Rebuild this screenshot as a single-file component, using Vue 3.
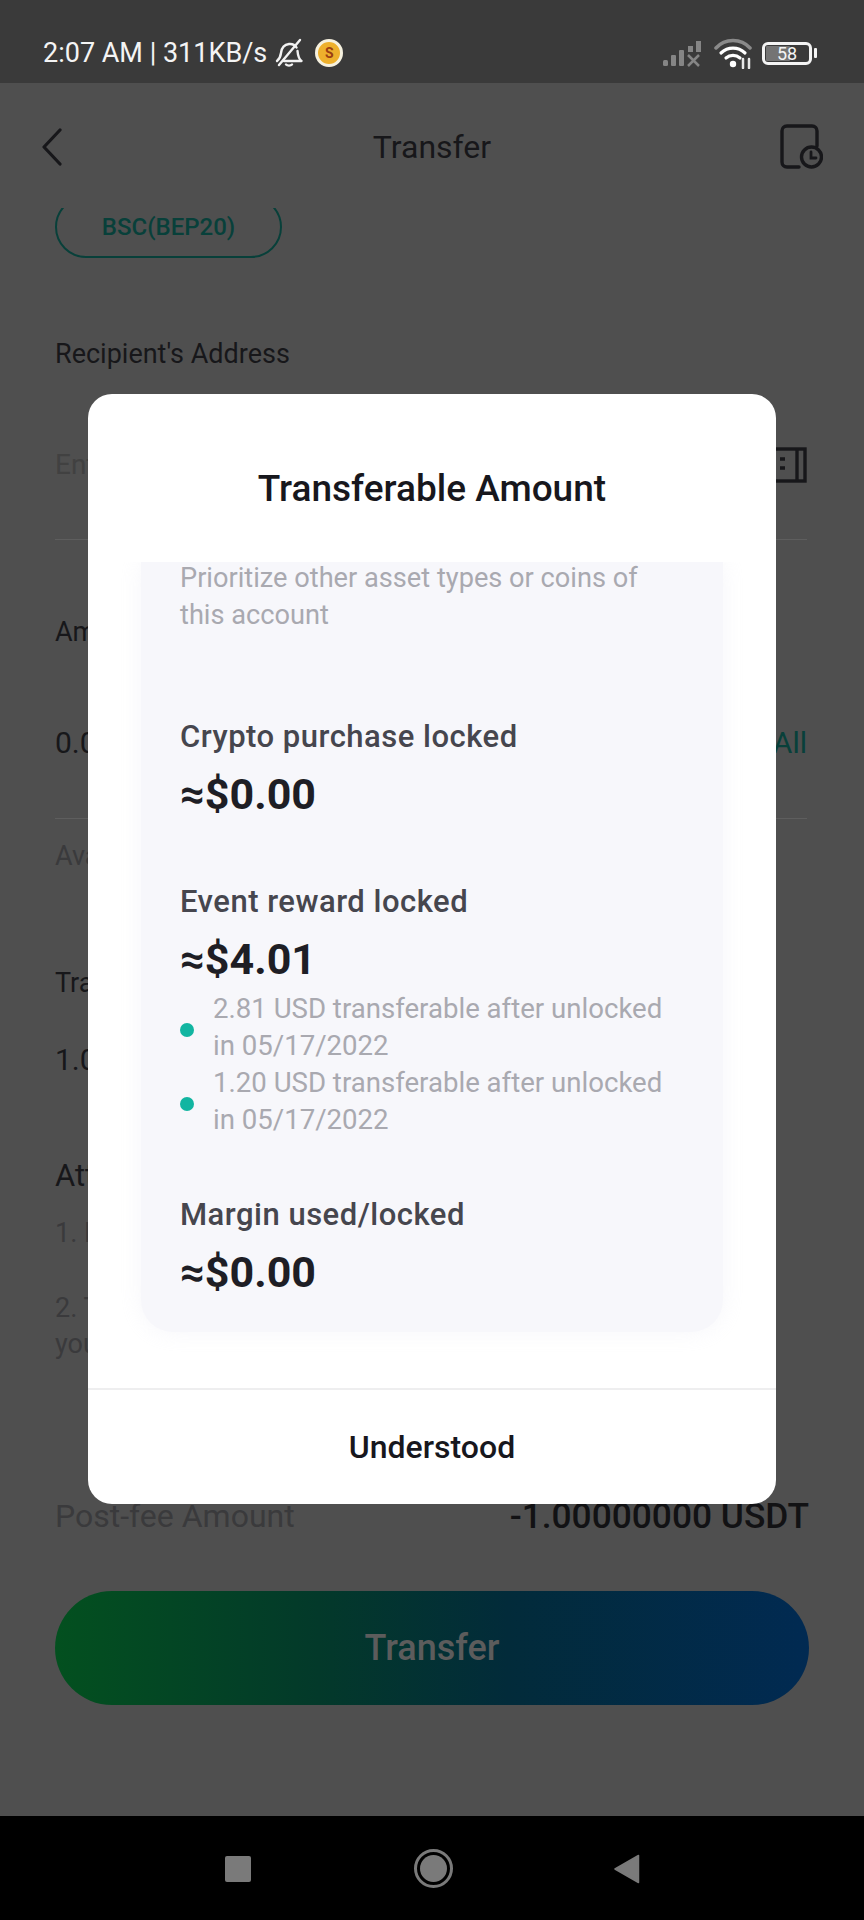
<template>
  <div class="screen">
    <div class="status-bar">
      <div class="status-left">
        <span class="status-text">2:07 AM | 311KB/s</span>
        <svg class="bell" viewBox="0 0 30 30" fill="none" stroke="#f2f2f2" stroke-width="2.4" stroke-linecap="round" stroke-linejoin="round">
          <path d="M3 23c2.500-2 3.500-4 4-8 .6-5 3-8.500 8-9 3-.3 6 1 7.500 3.500" />
          <path d="M23.500 13c.4 4.500 1.500 8 4 10H10" />
          <path d="M12 26.500c1.500 1.500 4.500 1.500 6 0" />
          <path d="M5 27 26 2" />
        </svg>
        <span class="coin"><span class="coin-s">S</span></span>
      </div>
      <div class="status-right">
        <svg class="signal" viewBox="0 0 41 30">
          <rect x="1" y="22" width="5" height="6" rx="1.500" fill="#858585" />
          <rect x="9" y="17" width="5" height="11" rx="1" fill="#858585" />
          <rect x="17" y="12" width="5" height="16" rx="1" fill="#858585" />
          <rect x="26" y="8" width="5" height="6" fill="#858585" />
          <rect x="34" y="3" width="5" height="11" fill="#858585" />
          <path d="M26 17l11 11M37 17 26 28" stroke="#858585" stroke-width="2.500" />
        </svg>
        <svg class="wifi" viewBox="0 0 38 32" fill="none" stroke-linecap="round">
          <path d="M2 11C11 1 27 1 36 11" stroke="#8a8a8a" stroke-width="3.500" />
          <path d="M7 16c7-6.500 17-6.500 24 0" stroke="#fff" stroke-width="3.200" />
          <path d="M12 21c4-3.500 10-3.500 14 0" stroke="#fff" stroke-width="3.200" />
          <circle cx="19" cy="27" r="3.200" fill="#fff" />
          <path d="M29 22v9M35 22v9" stroke="#e8e8e8" stroke-width="2.500" />
        </svg>
        <div class="battery">
          <div class="battery-body">
            <div class="battery-fill" :style="{ width: batteryLevel + '%' }"></div>
            <span class="battery-text">{{ batteryLevel }}</span>
          </div>
          <div class="battery-cap"></div>
        </div>
      </div>
    </div>

    <div class="page">
      <div class="header">
        <svg class="back" viewBox="0 0 22 38" fill="none" stroke="#17171a" stroke-width="3.200" stroke-linecap="round" stroke-linejoin="round">
          <path d="M19 2 3 19l16 17" />
        </svg>
        <span class="header-title">Transfer</span>
        <svg class="history" viewBox="0 0 44 46" fill="none" stroke="#17171a" stroke-width="3.400" stroke-linecap="round">
          <path d="M20 43H8c-3 0-5-2-5-5V7c0-3 2-5 5-5h25c3 0 5 2 5 5v15" />
          <circle cx="32.500" cy="33" r="10" />
          <path d="M32 28v6h5" stroke-width="2.800" />
        </svg>
      </div>

      <div class="pill-clip">
        <div class="pill">BSC(BEP20)</div>
      </div>

      <div class="form">
        <div class="label label-recipient">Recipient's Address</div>
        <div class="field field-address">
          <span class="placeholder">Enter</span>
          <svg class="scan" viewBox="0 0 40 36" fill="none" stroke="#17171a" stroke-width="3.400">
            <rect x="2" y="2" width="36" height="32" />
            <path d="M30 2v32" />
            <path d="M13 12h5M13 21h5" />
          </svg>
        </div>
        <div class="label label-amount">Amount</div>
        <div class="field field-amount">
          <span class="value">0.00</span>
          <span class="all">All</span>
        </div>
        <div class="dim available">Available</div>
        <div class="label label-fee">Transfer Fee</div>
        <div class="value fee-value">1.00</div>
        <div class="attention">Attention</div>
        <div class="dim note-first">1. Please</div>
        <div class="dim note-second">2. The</div>
        <div class="dim">your</div>
        <div class="post-fee">
          <span class="post-fee-label">Post-fee Amount</span>
          <span class="post-fee-value">-1.00000000 USDT</span>
        </div>
        <div class="submit">Transfer</div>
      </div>
    </div>

    <div class="nav-bar">
      <div class="nav-square"></div>
      <div class="nav-circle"><div class="nav-dot"></div></div>
      <svg class="nav-back" viewBox="0 0 26 30"><path d="M24.500 1.500 1 15l23.500 13.500z" fill="#7a7a7a" stroke="#7a7a7a" stroke-width="1.500" stroke-linejoin="round" /></svg>
    </div>

    <div class="modal">
      <h2 class="modal-title">Transferable Amount</h2>
      <div class="modal-body">
        <div class="panel">
          <p class="intro">Prioritize other asset types or coins of this account</p>
          <div v-for="item in lockedItems" :key="item.label" class="locked">
            <div class="locked-label">{{ item.label }}</div>
            <div class="locked-amount">{{ item.amount }}</div>
            <div v-for="note in item.notes" :key="note" class="unlock-note">
              <span class="dot"></span>
              <span class="unlock-text">{{ note }}</span>
            </div>
          </div>
        </div>
      </div>
      <div class="modal-footer">Understood</div>
    </div>
  </div>
</template>

<script setup>
const batteryLevel = 58

const lockedItems = [
  { label: 'Crypto purchase locked', amount: '≈$0.00', notes: [] },
  {
    label: 'Event reward locked',
    amount: '≈$4.01',
    notes: [
      '2.81 USD transferable after unlocked in 05/17/2022',
      '1.20 USD transferable after unlocked in 05/17/2022',
    ],
  },
  { label: 'Margin used/locked', amount: '≈$0.00', notes: [] },
]
</script>

<style>
html,
body {
  margin: 0;
  background: #4f4f4f;
}
</style>

<style scoped>
* {
  box-sizing: border-box;
}

.screen {
  position: relative;
  width: 864px;
  height: 1920px;
  display: flex;
  flex-direction: column;
  overflow: hidden;
  background: #4f4f4f;
  font-family: Roboto, 'Noto Sans', sans-serif;
  color: #17171a;
}

/* status bar */
.status-bar {
  height: 83px;
  flex: none;
  display: flex;
  justify-content: space-between;
  align-items: center;
  padding: 23px 47px 0 43px;
  background: #3a3a3a;
  color: #f4f4f4;
}

.status-left,
.status-right {
  display: flex;
  align-items: center;
}

.status-text {
  font-size: 27px;
  line-height: 34px;
}

.bell {
  width: 30px;
  height: 30px;
  margin-left: 7px;
}

.coin {
  width: 28px;
  height: 28px;
  margin-left: 11px;
  border-radius: 50%;
  border: 3px solid #f6f1df;
  background: #eeb02c;
  display: flex;
  align-items: center;
  justify-content: center;
}

.coin-s {
  font-size: 14px;
  font-weight: 700;
  line-height: 1;
  color: #9a3d12;
}

.signal {
  width: 41px;
  height: 30px;
}

.wifi {
  width: 38px;
  height: 32px;
  margin-left: 11px;
}

.battery {
  display: flex;
  align-items: center;
  margin-left: 10px;
}

.battery-body {
  position: relative;
  width: 50px;
  height: 23px;
  border: 3px solid #f4f4f4;
  border-radius: 6px;
  padding: 1px;
}

.battery-fill {
  height: 100%;
  background: #747474;
  border-radius: 1px;
}

.battery-text {
  position: absolute;
  inset: 0;
  text-align: center;
  font-size: 18px;
  line-height: 17px;
  color: #f4f4f4;
}

.battery-cap {
  width: 3px;
  height: 10px;
  margin-left: 2px;
  background: #f4f4f4;
  border-radius: 1px;
}

/* page behind the dialog */
.page {
  flex: 1;
  min-height: 0;
  overflow: hidden;
}

.header {
  height: 125px;
  display: grid;
  grid-template-columns: 1fr auto 1fr;
  align-items: center;
  padding: 2px 41px 0;
}

.back {
  width: 22px;
  height: 38px;
}

.header-title {
  font-size: 32px;
  line-height: 36px;
  color: #17171a;
}

.history {
  width: 44px;
  height: 46px;
  justify-self: end;
}

.pill-clip {
  height: 50px;
  margin: 0 55px;
  overflow: hidden;
}

.pill {
  width: 227px;
  height: 62px;
  margin-top: -12px;
  border: 2px solid #08403a;
  border-radius: 31px;
  text-align: center;
  font-size: 24px;
  font-weight: 500;
  line-height: 58px;
  color: #08403a;
}

.form {
  padding: 0 55px;
}

.label,
.value,
.dim {
  font-size: 27px;
  line-height: 36px;
}

.value {
  font-size: 30px;
}

.dim {
  color: #3a3a3c;
}

.label-recipient {
  margin-top: 78px;
}

.field {
  display: flex;
  align-items: center;
  justify-content: space-between;
  margin-right: 2px;
  border-bottom: 1px solid #5e5e5e;
}

.field-address {
  padding: 75px 0 56px;
}

.placeholder {
  font-size: 28px;
  line-height: 36px;
  color: #414141;
}

.scan {
  width: 40px;
  height: 36px;
}

.label-amount {
  margin-top: 74px;
}

.field-amount {
  padding: 75px 0 57px;
}

.all {
  font-size: 30px;
  line-height: 36px;
  color: #08403a;
}

.available {
  margin-top: 19px;
}

.label-fee {
  margin-top: 91px;
}

.fee-value {
  margin-top: 41px;
}

.attention {
  margin-top: 78px;
  font-size: 31px;
  line-height: 40px;
}

.note-first {
  margin-top: 19px;
}

.note-second {
  margin-top: 39px;
}

.post-fee {
  display: flex;
  justify-content: space-between;
  align-items: center;
  margin-top: 136px;
  line-height: 36px;
}

.post-fee-label {
  font-size: 32px;
  color: #3a3a3c;
}

.post-fee-value {
  font-size: 35.3px;
  font-weight: 500;
  color: #121214;
}

.submit {
  height: 114px;
  margin-top: 57px;
  border-radius: 57px;
  background: linear-gradient(90deg, #03501f 0%, #03392a 35%, #022b3a 60%, #012a52 100%);
  text-align: center;
  font-size: 36px;
  font-weight: 500;
  line-height: 114px;
  color: #5c5c5c;
}

/* navigation bar */
.nav-bar {
  height: 104px;
  flex: none;
  display: flex;
  align-items: center;
  justify-content: center;
  padding-top: 1px;
  background: #000;
}

.nav-square {
  width: 26px;
  height: 26px;
  border-radius: 2px;
  background: #7a7a7a;
}

.nav-circle {
  width: 39px;
  height: 39px;
  margin-left: 163px;
  border: 3px solid #7a7a7a;
  border-radius: 50%;
  padding: 3px;
}

.nav-dot {
  width: 100%;
  height: 100%;
  border-radius: 50%;
  background: #7a7a7a;
}

.nav-back {
  width: 26px;
  height: 30px;
  margin-left: 161px;
}

/* dialog */
.modal {
  position: absolute;
  top: 394px;
  left: 88px;
  width: 688px;
  height: 1110px;
  display: flex;
  flex-direction: column;
  background: #fff;
  border-radius: 24px;
  overflow: hidden;
}

.modal-title {
  height: 168px;
  flex: none;
  margin: 0;
  padding-top: 73px;
  text-align: center;
  font-size: 37px;
  font-weight: 500;
  line-height: 44px;
  color: #17171d;
}

.modal-body {
  height: 826px;
  flex: none;
  padding: 0 53px;
  overflow: hidden;
}

.panel {
  height: 770px;
  padding: 0 39px;
  background: #f7f7fb;
  border-radius: 0 0 32px 32px;
  box-shadow: 0 0 22px rgba(244, 244, 249, 0.8);
  overflow: hidden;
}

.intro {
  margin: -2px 0 0;
  font-size: 27.2px;
  line-height: 37px;
  color: #a9a9b0;
}

.locked {
  margin-bottom: 65px;
}

.intro + .locked {
  margin-top: 85px;
}

.locked-label {
  font-size: 31px;
  font-weight: 500;
  letter-spacing: 0.5px;
  line-height: 36px;
  color: #46464e;
}

.locked-amount {
  margin-top: 14px;
  font-size: 43px;
  font-weight: 700;
  line-height: 50px;
  color: #1e1e25;
}

.locked-amount + .unlock-note {
  margin-top: 6px;
}

.locked:has(.unlock-note) {
  margin-bottom: 59px;
}

.unlock-note {
  display: flex;
  align-items: center;
  padding-right: 10px;
}

.dot {
  width: 14px;
  height: 14px;
  flex: none;
  margin-top: 5px;
  border-radius: 50%;
  background: #12b5a1;
}

.unlock-text {
  margin-left: 19px;
  font-size: 27.6px;
  line-height: 37px;
  color: #a9a9b0;
}

.modal-footer {
  flex: 1;
  border-top: 2px solid #eeeeef;
  text-align: center;
  font-size: 32px;
  font-weight: 500;
  line-height: 114px;
  color: #17171d;
}
</style>
